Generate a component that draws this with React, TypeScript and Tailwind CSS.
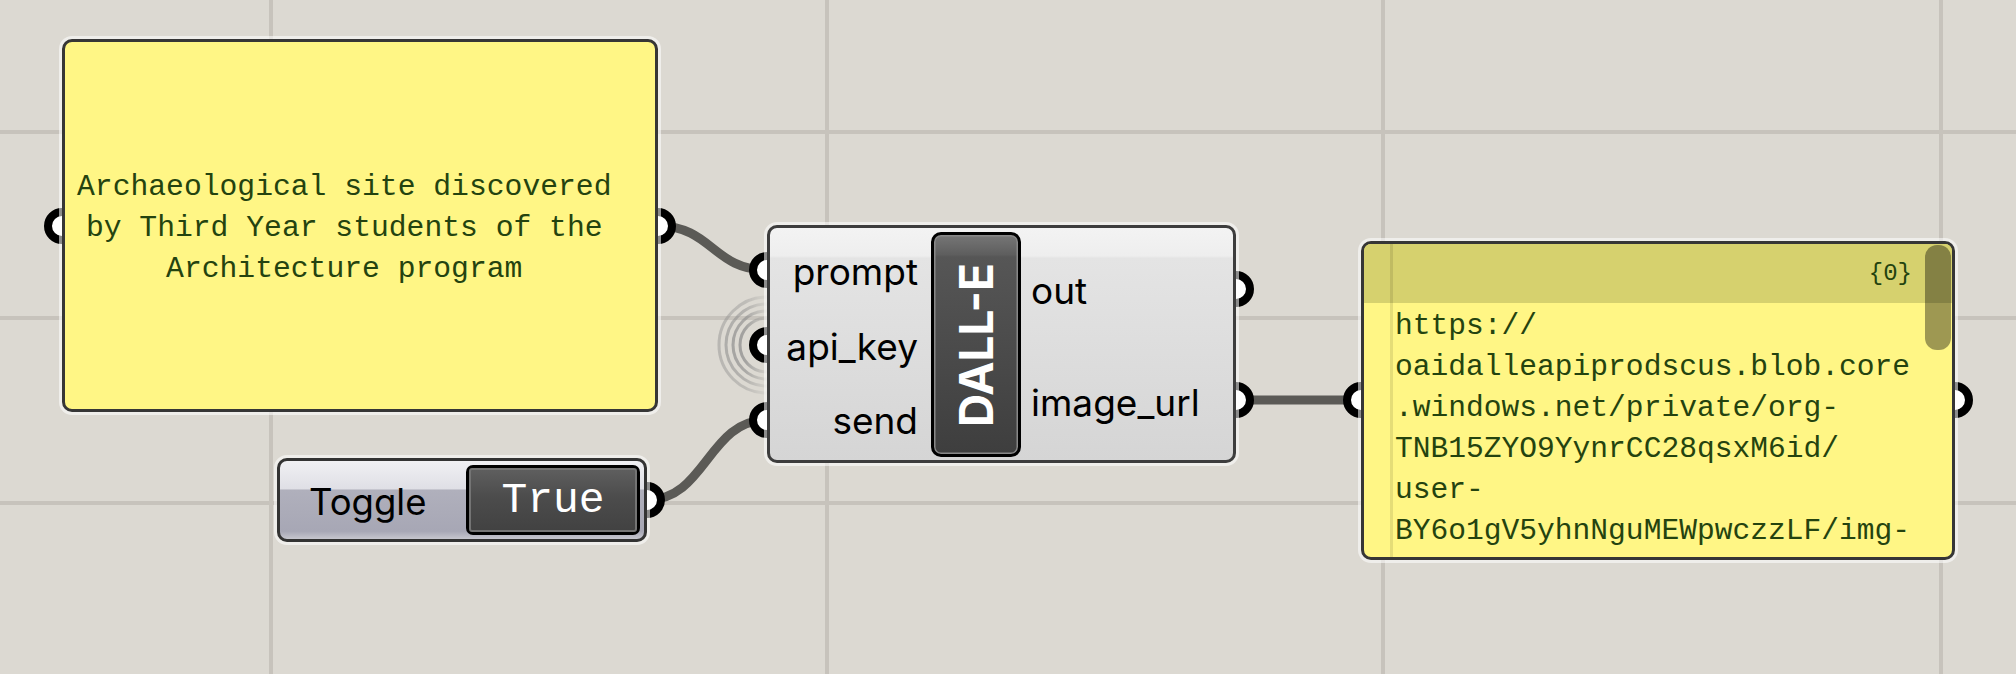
import React from "react";

export default function App() {
  return (
    <div className="relative w-[2016px] h-[674px] overflow-hidden bg-[#dcd9d2]">
      {/* grid */}
      <div className="absolute top-0 bottom-0 left-[269px] w-[4px] bg-[#c7c3bc]" />
      <div className="absolute top-0 bottom-0 left-[825px] w-[4px] bg-[#c7c3bc]" />
      <div className="absolute top-0 bottom-0 left-[1381px] w-[4px] bg-[#c7c3bc]" />
      <div className="absolute top-0 bottom-0 left-[1939px] w-[4px] bg-[#c7c3bc]" />
      <div className="absolute left-0 right-0 top-[130px] h-[4px] bg-[#c7c3bc]" />
      <div className="absolute left-0 right-0 top-[316px] h-[4px] bg-[#c7c3bc]" />
      <div className="absolute left-0 right-0 top-[501px] h-[4px] bg-[#c7c3bc]" />

      {/* wires, rings, ports */}
      <svg className="absolute inset-0" width="2016" height="674" viewBox="0 0 2016 674">
        <defs>
          <linearGradient id="ringfade" x1="712" y1="0" x2="768" y2="0" gradientUnits="userSpaceOnUse">
            <stop offset="0" stopColor="#fff" stopOpacity="1" />
            <stop offset="0.6" stopColor="#fff" stopOpacity="0.8" />
            <stop offset="1" stopColor="#fff" stopOpacity="0.1" />
          </linearGradient>
          <mask id="ringmask" maskUnits="userSpaceOnUse" x="0" y="0" width="2016" height="674">
            <rect x="690" y="280" width="80" height="130" fill="url(#ringfade)" />
          </mask>
        </defs>
        <path d="M658,226 C712,226 713,270 767,270" fill="none" stroke="#5b5a56" strokeWidth="9" />
        <path d="M647,500 C706,500 708,420 767,420" fill="none" stroke="#5b5a56" strokeWidth="9" />
        <path d="M1236,400 L1361,400" fill="none" stroke="#5b5a56" strokeWidth="9" />
        <g mask="url(#ringmask)" fill="none" stroke="#8a8a8a">
          <circle cx="767" cy="345" r="27" strokeWidth="3" strokeOpacity="0.85" />
          <circle cx="767" cy="345" r="34" strokeWidth="3" strokeOpacity="0.75" />
          <circle cx="767" cy="345" r="41" strokeWidth="3" strokeOpacity="0.6" />
          <circle cx="767" cy="345" r="48" strokeWidth="3" strokeOpacity="0.45" />
        </g>
        <g fill="#ffffff" stroke="#000000" strokeWidth="8">
          <circle cx="62" cy="226" r="14" />
          <circle cx="658" cy="226" r="14" />
          <circle cx="767" cy="270" r="14" />
          <circle cx="767" cy="345" r="14" />
          <circle cx="767" cy="420" r="14" />
          <circle cx="1236" cy="289" r="14" />
          <circle cx="1236" cy="400" r="14" />
          <circle cx="647" cy="500" r="14" />
          <circle cx="1361" cy="400" r="14" />
          <circle cx="1955" cy="400" r="14" />
        </g>
      </svg>

      {/* prompt panel */}
      <div className="absolute left-[62px] top-[39px] w-[596px] h-[373px] rounded-[10px] border-[3px] border-[#363636] bg-[#fff685] shadow-[0_0_0_3px_rgba(255,255,255,0.55)] flex items-center">
        <div className="ml-[12px] mt-[5px] w-fit text-center font-['Liberation_Mono',monospace] text-[29.7px] leading-[41px] text-[#24430f] whitespace-pre">
          <div>Archaeological site discovered</div>
          <div>by Third Year students of the</div>
          <div>Architecture program</div>
        </div>
      </div>

      {/* toggle */}
      <div className="absolute left-[277px] top-[458px] w-[370px] h-[84px] rounded-[10px] border-[3px] border-[#333333] overflow-hidden shadow-[0_0_0_3px_rgba(255,255,255,0.55)] flex bg-[linear-gradient(to_bottom,#f0f0f3_0%,#dfdfe5_36%,#b0b0bc_37%,#a7a7b5_90%,#c6c6ce_100%)]">
        <div className="flex-1 flex items-center pl-[29px] pt-[4px] font-[Inter] text-[36.5px] text-black">
          Toggle
        </div>
        <div className="my-auto mr-[4px] w-[174px] h-[70px] rounded-[7px] bg-black p-[3px]">
          <div className="w-full h-full rounded-[3px] border-2 border-[#747474] bg-[linear-gradient(to_bottom,#5e5e5e_0%,#4c4c4c_45%,#424242_100%)] flex items-center justify-center font-['Liberation_Mono',monospace] text-[43px] leading-none text-white">
            True
          </div>
        </div>
      </div>

      {/* DALL-E component */}
      <div className="absolute left-[767px] top-[225px] w-[469px] h-[238px] rounded-[10px] border-[3px] border-[#3d3d3d] shadow-[0_0_0_3px_rgba(255,255,255,0.55)] bg-[linear-gradient(to_bottom,#f3f3f3_0%,#eeeeee_12%,#e4e4e4_13%,#d5d5d5_100%)] flex font-[Inter] text-[37px] text-black leading-none">
        <div className="w-[148px] pt-[6px] flex flex-col items-end">
          <div className="h-[75px] flex items-center">prompt</div>
          <div className="h-[75px] flex items-center">api_key</div>
          <div className="h-[73px] flex items-center">send</div>
        </div>
        <div className="ml-[13px] mt-[4px] w-[90px] h-[225px] rounded-[10px] border-[3px] border-black shadow-[inset_0_0_0_1.5px_#888888] bg-[linear-gradient(to_bottom,#767676_0%,#5e5e5e_9%,#565656_10%,#3e3e3e_100%)] flex items-center justify-center">
          <span className="-rotate-90 font-bold text-white text-[46px] leading-none whitespace-nowrap">DALL-E</span>
        </div>
        <div className="ml-[10px] pt-[6px] flex flex-col">
          <div className="h-[112px] flex items-center">out</div>
          <div className="h-[112px] flex items-center">image_url</div>
        </div>
      </div>

      {/* output panel */}
      <div className="absolute left-[1361px] top-[241px] w-[594px] h-[319px] rounded-[10px] border-[3px] border-[#363636] bg-[#fff685] overflow-hidden shadow-[0_0_0_3px_rgba(255,255,255,0.55)] font-['Liberation_Mono',monospace] text-[#24430f]">
        <div className="relative h-full">
          <div className="h-[59px] bg-[#d6d16e] flex items-center justify-end pr-[40px] text-[24px]">
            {"{0}"}
          </div>
          <div className="pt-[3px] pl-[31px] text-[29.6px] leading-[41px] whitespace-pre">
            <div>https://</div>
            <div>oaidalleapiprodscus.blob.core</div>
            <div>.windows.net/private/org-</div>
            <div>TNB15ZYO9YynrCC28qsxM6id/</div>
            <div>user-</div>
            <div>BY6o1gV5yhnNguMEWpwczzLF/img-</div>
          </div>
          <div className="absolute left-[26px] top-0 bottom-0 w-[3px] bg-black/10" />
          <div className="absolute right-[1px] top-[1px] w-[26px] h-[105px] rounded-[12px] bg-black/[0.38]" />
        </div>
      </div>
    </div>
  );
}
